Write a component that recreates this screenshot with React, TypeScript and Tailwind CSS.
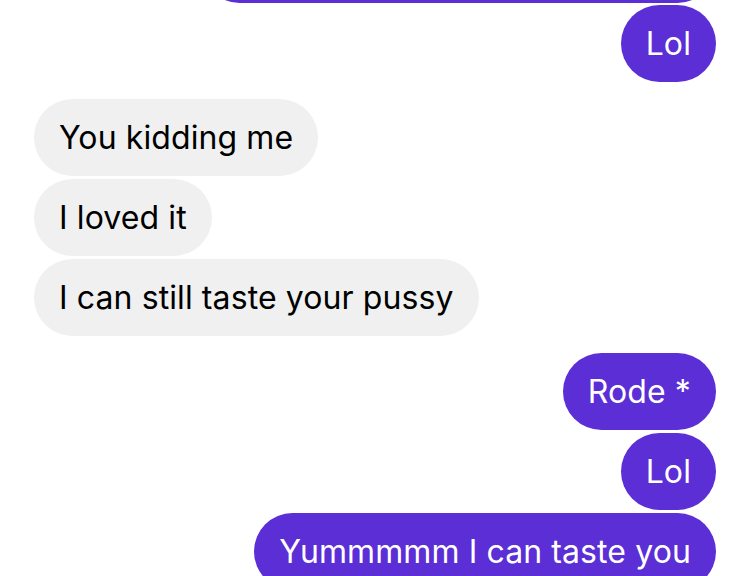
const PURPLE = "bg-[#5b2ed6] text-white";
const GRAY = "bg-[#f0f0f0] text-black";

type Msg = { text: string; mine: boolean };

const groups: Msg[][] = [
  [{ text: "Lol", mine: true }],
  [
    { text: "You kidding me", mine: false },
    { text: "I loved it", mine: false },
    { text: "I can still taste your pussy", mine: false },
  ],
  [
    { text: "Rode *", mine: true },
    { text: "Lol", mine: true },
    { text: "Yummmmm I can taste you", mine: true },
  ],
];

const Bubble = ({ msg }: { msg: Msg }) => (
  <div className={`flex ${msg.mine ? "justify-end" : "justify-start"}`}>
    <div
      className={`h-[77px] flex items-center px-[25px] rounded-[39px] text-[32px] leading-none tracking-[0.1px] ${
        msg.mine ? PURPLE : GRAY
      }`}
    >
      {msg.text}
    </div>
  </div>
);

export default function App() {
  return (
    <div
      className="w-[746px] h-[576px] overflow-hidden bg-white pl-[34px] pr-[30px]"
      style={{ fontFamily: "Inter, 'Liberation Sans', sans-serif" }}
    >
      {/* tail of the previous message, cut off by the top edge */}
      <div className="flex justify-end -mt-[74px]">
        <div className={`h-[77px] w-[515px] rounded-[39px] ${PURPLE}`} />
      </div>
      <div className="flex flex-col gap-[17px] mt-[2px]">
        {groups.map((g, i) => (
          <div key={i} className="flex flex-col gap-[3px]">
            {g.map((m, j) => (
              <Bubble key={j} msg={m} />
            ))}
          </div>
        ))}
      </div>
    </div>
  );
}
